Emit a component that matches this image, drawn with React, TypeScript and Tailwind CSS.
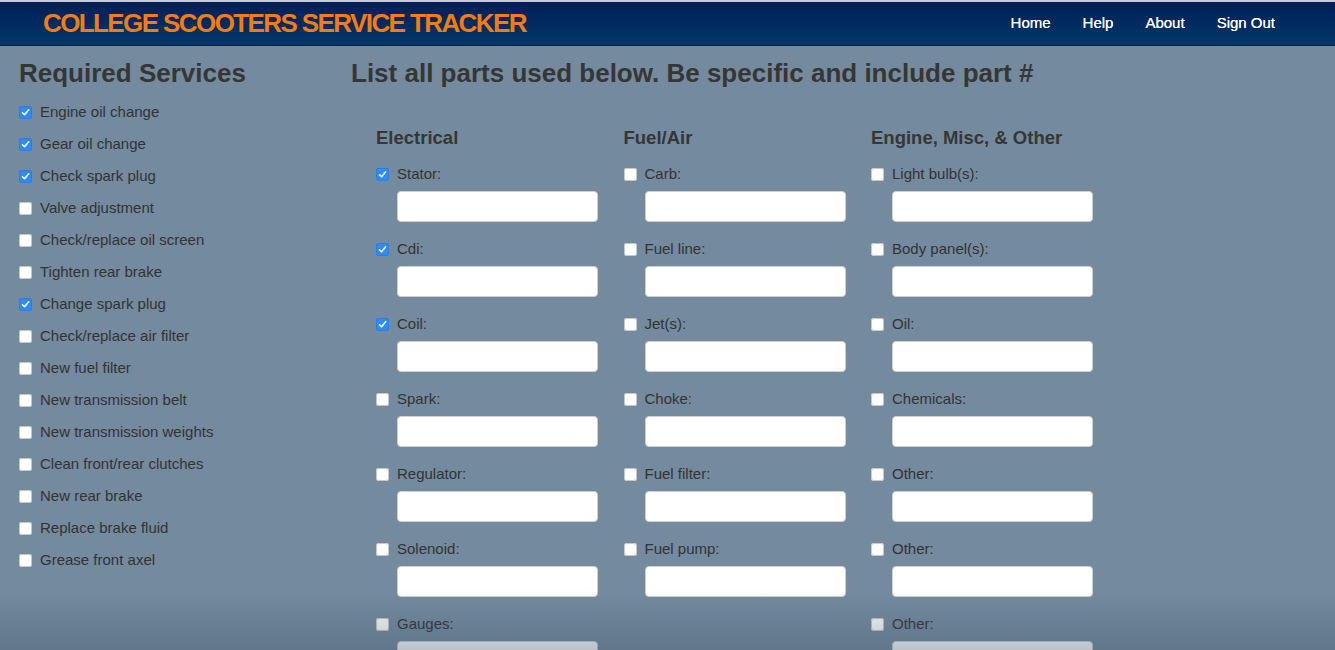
import { useState } from 'react'

const services: [string, boolean][] = [
  ['Engine oil change', true],
  ['Gear oil change', true],
  ['Check spark plug', true],
  ['Valve adjustment', false],
  ['Check/replace oil screen', false],
  ['Tighten rear brake', false],
  ['Change spark plug', true],
  ['Check/replace air filter', false],
  ['New fuel filter', false],
  ['New transmission belt', false],
  ['New transmission weights', false],
  ['Clean front/rear clutches', false],
  ['New rear brake', false],
  ['Replace brake fluid', false],
  ['Grease front axel', false],
]

const columns: { title: string; parts: [string, boolean][] }[] = [
  {
    title: 'Electrical',
    parts: [
      ['Stator:', true],
      ['Cdi:', true],
      ['Coil:', true],
      ['Spark:', false],
      ['Regulator:', false],
      ['Solenoid:', false],
      ['Gauges:', false],
    ],
  },
  {
    title: 'Fuel/Air',
    parts: [
      ['Carb:', false],
      ['Fuel line:', false],
      ['Jet(s):', false],
      ['Choke:', false],
      ['Fuel filter:', false],
      ['Fuel pump:', false],
    ],
  },
  {
    title: 'Engine, Misc, & Other',
    parts: [
      ['Light bulb(s):', false],
      ['Body panel(s):', false],
      ['Oil:', false],
      ['Chemicals:', false],
      ['Other:', false],
      ['Other:', false],
      ['Other:', false],
    ],
  },
]

function Check({ initial }: { initial: boolean }) {
  const [on, setOn] = useState(initial)
  return (
    <span
      onClick={() => setOn(!on)}
      className={
        on
          ? 'flex h-[13px] w-[13px] shrink-0 items-center justify-center rounded-[3px] bg-[#2f8cf6] shadow-[inset_0_0_0_1px_#2a7fe0]'
          : 'flex h-[13px] w-[13px] shrink-0 items-center justify-center rounded-[3px] bg-white shadow-[inset_0_0_0_1px_#c8c8c8]'
      }
    >
      {on && (
        <svg width="9" height="9" viewBox="0 0 8 8">
          <path d="M1.3 4.2 L3.2 6 L6.8 1.6" fill="none" stroke="white" strokeWidth="1.4" strokeLinecap="round" strokeLinejoin="round" />
        </svg>
      )}
    </span>
  )
}

export default function App() {
  return (
    <div
      className="relative h-[650px] overflow-hidden bg-[#748a9e] text-[#333]"
      style={{ fontFamily: '"Liberation Sans", Arial, sans-serif' }}
    >
      {/* HEADER */}
      <div className="flex h-[46px] items-center justify-between border-t-2 border-b border-t-[#c9ccd1] border-b-[#0c1f3a] bg-gradient-to-b from-[#001d58] to-[#063868] pl-[43px] pr-[60px]">
        <div className="text-[26px] font-bold tracking-[-1.6px] text-[#f57c10]">COLLEGE SCOOTERS SERVICE TRACKER</div>
        <div className="flex gap-[32px] text-[15px] text-white [text-shadow:0_0_0.4px_white]">
          <span>Home</span>
          <span>Help</span>
          <span>About</span>
          <span>Sign Out</span>
        </div>
      </div>

      <div className="flex">
        {/* SIDEBAR */}
        <div className="w-[351px] shrink-0 pl-[19px] pt-[12px]">
          <h2 className="text-[26px] font-bold leading-[30px] text-[#363636]">Required Services</h2>
          <div className="mt-[8px] flex flex-col">
            {services.map(([name, on]) => (
              <label key={name} className="flex h-[32px] items-center gap-[8px] text-[15px]">
                <Check initial={on} />
                <span>{name}</span>
              </label>
            ))}
          </div>
        </div>

        {/* PARTS */}
        <div className="flex-1 pt-[12px]">
          <h2 className="text-[26px] font-bold leading-[30px] text-[#363636]">
            List all parts used below. Be specific and include part #
          </h2>
          <div className="mt-[38px] flex pl-[25px]">
            {columns.map((col) => (
              <div key={col.title} className="w-[247.5px]">
                <h3 className="text-[18.5px] font-bold leading-[24px] text-[#363636]">{col.title}</h3>
                <div className="mt-[14px] flex flex-col">
                  {col.parts.map(([name, on], i) => (
                    <div key={i} className="flex h-[75px] flex-col">
                      <label className="flex h-[20px] items-center gap-[8px] text-[15px]">
                        <Check initial={on} />
                        <span>{name}</span>
                      </label>
                      <input
                        type="text"
                        className="ml-[21px] mt-[7px] h-[31px] w-[201px] rounded-[4px] border border-[#d0d0d0] bg-white outline-none"
                      />
                    </div>
                  ))}
                </div>
              </div>
            ))}
          </div>
        </div>
      </div>

      {/* bottom shade */}
      <div className="pointer-events-none absolute bottom-0 left-0 right-0 h-[60px] bg-gradient-to-b from-transparent to-[#3d5266]/35" />
    </div>
  )
}
